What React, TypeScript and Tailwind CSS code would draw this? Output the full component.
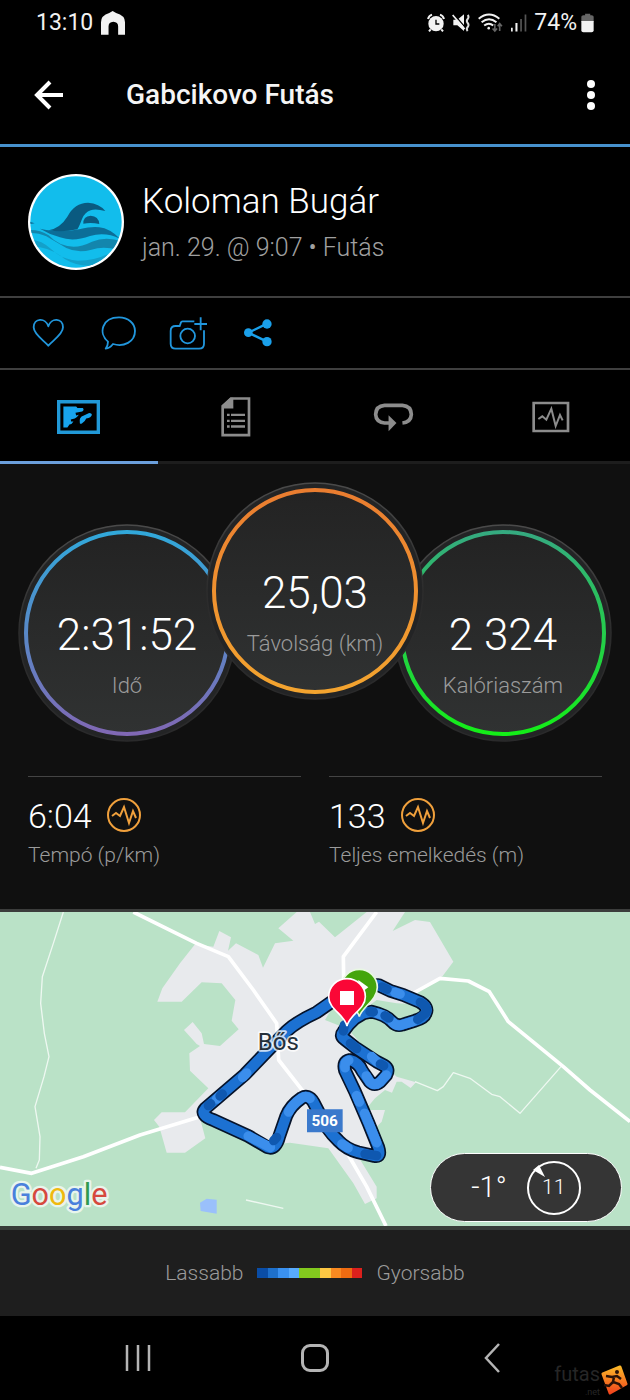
import React from "react";

const HAIR = "fill-none stroke-[#2196dc]";

function HomeGlyph() {
  return (
    <svg viewBox="303 33 70 70" className="size-6 fill-[#f2f2f2]" aria-hidden="true">
      <path d="M303 102V66q0-20 24-27l10-6 10 6q26 7 26 27v36h-20V78q0-13-14-14-14 1-14 14v24z" />
    </svg>
  );
}

function AlarmGlyph() {
  return (
    <svg viewBox="336 40 54 56" className="h-5 w-[18px]" aria-hidden="true">
      <circle cx="363" cy="70" r="23" fill="#f2f2f2" />
      <path d="M339 56q3-10 12-13M387 56q-3-10-12-13M347 87l-5 6M379 87l5 6" fill="none" stroke="#f2f2f2" strokeWidth="6" />
      <path d="M363 58v13h10" fill="none" stroke="#000" strokeWidth="4" />
    </svg>
  );
}

function MuteGlyph() {
  return (
    <svg viewBox="416 40 54 56" className="h-5 w-[18px]" aria-hidden="true">
      <path d="M420 58h12l20-16v50l-20-17h-12z" fill="#f2f2f2" />
      <path d="M421 41l36 42" stroke="#000" strokeWidth="4" />
      <path d="M418 44l36 42" stroke="#f2f2f2" strokeWidth="5" />
      <path d="M463 44q5 6 0 12t0 12 0 12 0 12" fill="none" stroke="#ddd" strokeWidth="6" />
    </svg>
  );
}

function WifiGlyph() {
  return (
    <svg viewBox="490 36 78 62" className="h-5 w-[26px]" aria-hidden="true">
      <g fill="none" stroke="#f2f2f2" strokeWidth="6">
        <path d="M494 54q32-26 64 0" />
        <path d="M503 65q23-19 46 0" />
        <path d="M511 75q15-12 28 0" />
      </g>
      <circle cx="525" cy="83" r="4" fill="#f2f2f2" />
      <path d="M544 70v22M537 84l7 8 7-8M559 92V70M553 77l6-8 7 8" fill="none" stroke="#666" strokeWidth="5" />
    </svg>
  );
}

function SignalGlyph() {
  return (
    <svg viewBox="584 40 50 56" className="h-5 w-[17px]" aria-hidden="true">
      <path d="M587 82h5v11h-5zM600 68h6v25h-6z" fill="#f2f2f2" />
      <path d="M614 56h5v37h-5zM627 43h5v50h-5z" fill="#555" />
    </svg>
  );
}

function BatteryGlyph() {
  return (
    <svg viewBox="797 40 38 56" className="h-5 w-[13px]" aria-hidden="true">
      <path d="M798 50q0-5 6-5h5v-4h15v4h4q6 0 6 5v15h-36z" fill="#666" />
      <path d="M798 62h36v27q0 6-6 6h-24q-6 0-6-6z" fill="#f2f2f2" />
    </svg>
  );
}

function Avatar() {
  return (
    <svg viewBox="84 72 288 288" className="size-24 shrink-0" role="img" aria-label="Koloman Bugár">
      <defs>
        <clipPath id="avatar">
          <circle cx="228" cy="216" r="137" />
        </clipPath>
      </defs>
      <circle cx="228" cy="216" r="144" fill="#fff" />
      <g clipPath="url(#avatar)">
        <rect x="84" y="72" width="288" height="288" fill="#12bdec" />
        <path d="M84 213l20 7-12 2z" fill="#0c6e98" />
        <path d="M84 240q35-2 62 16 32 34 75 34 25 0 55-15 45-18 96 2l-18 22q-45-12-80 0-40 12-75-5-35-20-60-35-25-12-55-10z" fill="#1386ad" />
        <path d="M84 268q40 0 70 30 30 30 80 34 50 0 90-20l-20 30q-60 15-110-15-40-36-110-40z" fill="#13a0ca" />
        <path d="M120 236q18 5 38 6 45 4 80-4 40-10 60-6 30 3 62 34-45-22-90-8-50 18-90 4-30-8-60-26z" fill="#0c6e98" />
        <path d="M146 241q36-8 56-41 22-42 62-42 34 2 52 25-30-8-44-2-18 6-26 26-8 22-14 31-45 10-86 3z" fill="#0a5a80" />
        <path d="M250 221q-1-22 22-24 24 1 26 25-24-5-48-1z" fill="#0a5a80" />
      </g>
    </svg>
  );
}

function HeartIcon() {
  return (
    <svg viewBox="97 500 99 96" className={`h-8 w-[33px] ${HAIR}`} strokeWidth="5.500" aria-hidden="true">
      <path d="M146 586c-10-13-44-33-44-55 0-28 36-30 44-3 8-27 44-25 44 3 0 22-34 42-44 55z" strokeLinejoin="round" />
    </svg>
  );
}

function CommentIcon() {
  return (
    <svg viewBox="303 498 105 102" className={`h-[34px] w-[35px] ${HAIR}`} strokeWidth="5.500" aria-hidden="true">
      <path d="M324 575c-30-25-18-73 33-73 27 0 48 18 48 41 0 33-34 49-66 39-6 8-13 13-22 14 5-7 7-13 7-21z" strokeLinejoin="round" />
    </svg>
  );
}

function CameraIcon() {
  return (
    <svg viewBox="510 500 117 102" className={`h-[34px] w-[39px] ${HAIR}`} strokeWidth="5.500" aria-hidden="true">
      <path d="M586 516h-35q-5 0-6 6l-3 8h-12q-15 0-15 15v38q0 15 15 15h70q15 0 15-15v-40" />
      <circle cx="566" cy="560" r="22" />
      <path d="M605 504v39M586 524h38" />
    </svg>
  );
}

function ShareIcon() {
  return (
    <svg viewBox="732 504 90 90" className="size-[30px] fill-[#1aa0ea] stroke-[#1aa0ea]" aria-hidden="true">
      <path d="M804 521l-56 27 56 27" fill="none" strokeWidth="7" />
      <g stroke="none">
        <circle cx="748" cy="548" r="13" />
        <circle cx="804" cy="522" r="14" />
        <circle cx="804" cy="575" r="14" />
      </g>
    </svg>
  );
}

function MapTabIcon() {
  return (
    <svg viewBox="170 89 128 101" className="h-[34px] w-[43px]" aria-hidden="true">
      <path d="M175 94h118v91H175z" fill="none" stroke="#2199d8" strokeWidth="10" />
      <path d="M189 108h38l4 5h16q5 6-2 10l-20 4 2 8 8-2q-6 9-12 11l-12 3 1 6h7q-4 8-12 9l-6 9h-12z" fill="#18a4ee" />
      <path d="M238 158q-4-18 12-23l14-7q9-1 10 5-2 9-17 11-4 10-13 15-5 2-6-1z" fill="#18a4ee" />
    </svg>
  );
}

function DocTabIcon() {
  return (
    <svg viewBox="662 80 90 119" className="h-10 w-[30px]" aria-hidden="true">
      <path d="M692 84h54v110h-79v-87z" fill="none" stroke="#8c8c8c" strokeWidth="8" />
      <path d="M690 82h9v32h-34v-8z" fill="#8c8c8c" />
      <path d="M680 133h8M692 133h42M680 151h8M692 151h42M680 168h8M692 168h42" stroke="#8c8c8c" strokeWidth="7" />
    </svg>
  );
}

function LapTabIcon() {
  return (
    <svg viewBox="172 105 124 88" className="h-[30px] w-[41px]" aria-hidden="true">
      <path d="M222 167h-15q-26-3-27-26 1-25 27-27h54q26 2 27 27-1 23-27 26" fill="none" stroke="#8c8c8c" strokeWidth="11" />
      <path d="M219 144l24 23-24 25z" fill="#8c8c8c" />
    </svg>
  );
}

function ChartTabIcon() {
  return (
    <svg viewBox="650 91 114 96" className="h-8 w-[38px]" fill="none" stroke="#8c8c8c" aria-hidden="true">
      <path d="M655 97h103v84H655z" strokeWidth="8" />
      <path d="M669 145l12-8 12 10 15-33 13 52 13-33 8 16" strokeWidth="6" />
    </svg>
  );
}

function PulseIcon() {
  return (
    <svg viewBox="0 0 34 34" className="size-[34px]" fill="none" stroke="#f0a03c" aria-hidden="true">
      <circle cx="17" cy="17" r="16" strokeWidth="2" />
      <path d="M5 18l4-3 4 3 4-9 5 16 4-12 3 7" strokeWidth="2" />
    </svg>
  );
}

function IconButton({ label, children }: { label: string; children: React.ReactNode }) {
  return (
    <button type="button" aria-label={label} className="flex w-[70px] items-center justify-center">
      {children}
    </button>
  );
}

function Tab({ label, active, children }: { label: string; active?: boolean; children: React.ReactNode }) {
  return (
    <button
      type="button"
      role="tab"
      aria-label={label}
      aria-selected={!!active}
      className={`flex h-[94px] flex-1 items-center justify-center border-b-[3px] pt-0.5 ${active ? "border-[#6b9fdc]" : "border-[#1d1d1d]"}`}
    >
      {children}
    </button>
  );
}

function Dial({ value, label, from, to, id, className }: { value: string; label: string; from: string; to: string; id: string; className: string }) {
  return (
    <div className={`relative flex size-[218px] shrink-0 flex-col items-center rounded-full ${className}`}>
      <svg viewBox="0 0 218 218" className="absolute inset-0 size-full" aria-hidden="true">
        <defs>
          <linearGradient id={id} x1="0" y1="0" x2="0" y2="1">
            <stop offset="0" stopColor={from} />
            <stop offset="1" stopColor={to} />
          </linearGradient>
          <linearGradient id={`${id}-face`} x1="0" y1="0" x2="0" y2="1">
            <stop offset="0" stopColor="#232323" />
            <stop offset="1" stopColor="#303232" />
          </linearGradient>
          <linearGradient id={`${id}-rim`} x1="0" y1="0" x2="0" y2="1">
            <stop offset="0" stopColor="#4a4a4a" />
            <stop offset="0.5" stopColor="#2c2c2c" />
            <stop offset="1" stopColor="#2a2a2b" />
          </linearGradient>
        </defs>
        <circle cx="109" cy="109" r="108" fill="#232425" stroke={`url(#${id}-rim)`} strokeWidth="1.500" />
        <circle cx="109" cy="109" r="101" fill={`url(#${id}-face)`} stroke={`url(#${id})`} strokeWidth="4" />
      </svg>
      <span className="relative mt-[84px] text-[44px] leading-[54px] font-light text-white">{value}</span>
      <span className="relative mt-2.5 text-[22px] leading-7 font-light text-[#9b9b9b]">{label}</span>
    </div>
  );
}

function Metric({ value, label }: { value: string; label: string }) {
  return (
    <div className="flex-1 border-t border-[#444] pt-4">
      <div className="flex h-11 items-center gap-[15px] text-[34px] font-light text-white">
        <span className="pt-0.5">{value}</span>
        <PulseIcon />
      </div>
      <div className="mt-1 text-[21px] leading-7 font-light text-[#9b9b9b]">{label}</div>
    </div>
  );
}

const ROUTE =
  "M1060 262L1100 256L1135 255L1170 272L1210 285L1260 306Q1287 322 1277 340Q1273 354 1245 362L1207 374Q1190 380 1175 364Q1157 345 1115 335L1090 340L1065 355Q1045 372 1030 395Q1019 408 1033 417L1065 442L1130 485L1153 497Q1169 507 1159 525L1141 545Q1123 560 1109 545L1087 513Q1075 486 1049 480Q1027 484 1035 512L1065 575L1105 668L1135 742Q1145 772 1123 768L1075 757Q1040 748 1015 722Q980 690 958 640L940 606Q925 582 905 594Q870 618 858 650L838 708Q828 750 803 742L745 708L640 660Q598 645 616 625L665 583L735 523L800 455L860 393Q890 365 950 337L1010 295";

const LIGHT_SEGMENTS =
  "M1185 277L1200 282M1177 366Q1189 380 1207 374L1240 364M1115 470L1131 485M1159 525L1141 545Q1123 560 1109 545L1099 528M1046 481Q1033 486 1035 503M1070 587L1078 606M1094 640L1130 728M1026 732L1044 744M930 595Q918 586 905 594Q876 614 866 636M811 742L745 708M728 532L740 519M650 597L657 590M1133 340L1155 347";
const DARK_SEGMENTS =
  "M1146 261L1161 268M1261 307Q1287 322 1277 340L1253 358M1033 375L1030 393M1051 430L1070 446M1155 347L1167 354M1141 492L1151 497M1095 762L1130 767M821 722L830 712M625 617L632 611M660 588L667 582M1110 335L1120 336";

function RouteMap() {
  return (
    <svg viewBox="0 36 1890 942" preserveAspectRatio="xMidYMid slice" className="block h-[314px] w-full" role="img" aria-label="Bős">
      <rect y="36" width="1890" height="942" fill="#bae2c7" />
      <path
        d="M472 305L487 265L540 190L585 133L640 140L658 93L693 112L684 152L708 130L775 165L789 203L825 130L880 122L835 85L890 36H930L945 72L957 65L1005 112L1100 36H1215L1178 93L1245 60L1290 66L1360 185L1328 228L1255 275L1240 312L1190 310L1130 300L1070 345L1055 400L1100 450L1160 500L1190 530L1248 547L1232 564L1205 545L1190 545L1176 578L1155 570L1125 595L1100 625L1108 630H1155L1145 665L1120 690L1130 740L1075 770L1130 860V895L1095 912L1060 850L985 745L870 728L810 735L600 655L616 715L555 758H500L478 680L462 660L485 637H555L625 565L570 512L568 460L600 438L590 432L552 390L578 366L605 400L612 432L660 438L716 388L695 362L706 300L665 250L605 247L545 305Z"
        fill="#e8eaed"
      />
      <path d="M975 360L1030 382L1060 300L1010 300z" fill="#bae2c7" />
      <path d="M600 908l20-12 30 3v42l-48-8z" fill="#9ac0fb" />
      <g fill="none" stroke="#fff" strokeLinejoin="round">
        <path d="M190 36L160 130L127 230L122 310L133 400L147 470L132 530L105 620L120 710L118 780L108 805M1245 545L1312 572L1330 560L1360 518L1410 535L1475 583L1500 590L1560 640L1683 500M738 900L850 925" strokeWidth="4" opacity="0.75" />
        <path d="M400 36L590 130L685 170L760 270L830 370L836 480L910 575M0 802L95 820L250 770L420 705L600 650M1130 36L1030 170L1032 300M1230 285L1320 235L1405 243L1468 275L1525 365L1690 500L1770 570L1890 665M1045 765L1100 860L1158 978" strokeWidth="11" />
      </g>
      <g fill="none" strokeLinejoin="round" strokeLinecap="round">
        <path d={ROUTE} stroke="#06132a" strokeWidth="41" />
        <path d={ROUTE} stroke="#1c71d2" strokeWidth="31" />
        <path d={LIGHT_SEGMENTS} stroke="#3b8eec" strokeWidth="29" />
        <path d={DARK_SEGMENTS} stroke="#0f58b0" strokeWidth="28" />
      </g>
      <path d="M1078 350c-6-28-54-48-54-88a54 54 0 01108 0c0 40-48 60-54 88z" fill="#43a50c" stroke="#e8f8e2" strokeWidth="5" />
      <path d="M1075 240l30 22-30 22z" fill="#fff" />
      <path d="M1041 378c-7-34-55-50-55-88a55 54 0 01110 0c0 38-48 54-55 88z" fill="#fa0736" stroke="#fff" strokeWidth="5" />
      <path d="M1020 273h42v42h-42z" fill="#fff" />
      <path d="M921 628h107v69H921z" fill="#3a79cc" />
      <g fontFamily="Roboto, sans-serif">
        <text x="974" y="679" textAnchor="middle" fontSize="46" fontWeight="700" fill="#fff">506</text>
        <text x="835" y="450" textAnchor="middle" fontSize="72" fontWeight="400" fill="#25303a" stroke="#fff" strokeOpacity="0.75" strokeWidth="11" strokeLinejoin="round" paintOrder="stroke">Bős</text>
        <text x="32" y="914" fontSize="92" fontWeight="400" stroke="#e8f5ec" strokeWidth="14" strokeLinejoin="round" paintOrder="stroke">
          <tspan fill="#4a80dc">G</tspan>
          <tspan fill="#d6493e">o</tspan>
          <tspan fill="#f0b90f">o</tspan>
          <tspan fill="#4a80dc">g</tspan>
          <tspan fill="#2f9a50">l</tspan>
          <tspan fill="#d6493e">e</tspan>
        </text>
      </g>
    </svg>
  );
}

function WeatherPill() {
  return (
    <div className="absolute right-2 bottom-1 flex h-[69px] w-[192px] items-center justify-center gap-5 rounded-full border border-white bg-[#353535] font-light text-white">
      <span className="text-[29px]">-1°</span>
      <span className="relative flex size-[54px] items-center justify-center rounded-full border-2 border-white text-[21px]">
        11
        <svg viewBox="0 0 12 12" className="absolute top-0.5 left-1 size-3 fill-white" aria-hidden="true">
          <path d="M0 5L6 0L12 12z" />
        </svg>
      </span>
    </div>
  );
}

const SCALE = [
  "bg-[#0a4da6]",
  "bg-[#1e70cb]",
  "bg-[#3a91f0]",
  "bg-[#58abfc]",
  "bg-[#82c91e]",
  "bg-[#82c91e]",
  "bg-[#fdc743]",
  "bg-[#f98a20]",
  "bg-[#ee6b11]",
  "bg-[#dc201c]",
];

export default function App() {
  return (
    <div className="w-full bg-black font-[Roboto,sans-serif] text-white">
      <div className="flex h-[46px] items-center justify-between px-9 text-[23px] text-[#f2f2f2]">
        <div className="flex items-center gap-2">
          <span>13:10</span>
          <HomeGlyph />
        </div>
        <div className="flex items-center gap-[7px]">
          <AlarmGlyph />
          <MuteGlyph />
          <WifiGlyph />
          <SignalGlyph />
          <div className="flex items-center gap-1">
            <span>74%</span>
            <BatteryGlyph />
          </div>
        </div>
      </div>

      <header className="flex h-[101px] items-center border-b-[3px] border-[#4791cd] pr-[27px] pl-8">
        <button type="button" aria-label="Vissza" className="flex w-[94px] items-center">
          <svg viewBox="0 0 34 30" className="h-[30px] w-[34px]" fill="none" stroke="#fff" strokeWidth="4" aria-hidden="true">
            <path d="M18 2L5 15l13 13M5 15h26" />
          </svg>
        </button>
        <h1 className="flex-1 text-[28px] font-medium text-[#f5f5f5]">Gabcikovo Futás</h1>
        <button type="button" aria-label="Továbbiak" className="flex w-6 justify-center">
          <svg viewBox="0 0 8 30" className="h-[30px] w-2 fill-white" aria-hidden="true">
            <circle cx="4" cy="4" r="4" />
            <circle cx="4" cy="15" r="4" />
            <circle cx="4" cy="26" r="4" />
          </svg>
        </button>
      </header>

      <section className="flex h-[151px] items-center gap-[18px] border-b-2 border-[#3f3f3f] px-7">
        <Avatar />
        <div className="pt-1">
          <div className="text-[35px] leading-[44px] font-light">Koloman Bugár</div>
          <div className="mt-1 text-[25px] leading-10 font-light text-[#a0a0a0]">jan. 29. @ 9:07 • Futás</div>
        </div>
      </section>

      <div className="flex h-[72px] border-b-2 border-[#3f3f3f] px-[13px]">
        <IconButton label="Kedvelés"><HeartIcon /></IconButton>
        <IconButton label="Hozzászólás"><CommentIcon /></IconButton>
        <IconButton label="Fotó hozzáadása"><CameraIcon /></IconButton>
        <IconButton label="Megosztás"><ShareIcon /></IconButton>
      </div>

      <div role="tablist" className="flex">
        <Tab label="Térkép" active><MapTabIcon /></Tab>
        <Tab label="Részletek"><DocTabIcon /></Tab>
        <Tab label="Körök"><LapTabIcon /></Tab>
        <Tab label="Grafikonok"><ChartTabIcon /></Tab>
      </div>

      <section className="border-b-[3px] border-[#3c3d3c] bg-[#101010] pt-[18px]">
        <div className="flex justify-center">
          <Dial id="time" value="2:31:52" label="Idő" from="#31a8da" to="#8068b4" className="mt-[42px]" />
          <Dial id="distance" value="25,03" label="Távolság (km)" from="#ea7d30" to="#f3a42f" className="z-10 -mx-[30px] mb-[42px]" />
          <Dial id="calories" value="2 324" label="Kalóriaszám" from="#35aa80" to="#14ee18" className="mt-[42px]" />
        </div>
        <div className="mt-[34px] flex gap-7 px-7 pb-10">
          <Metric value="6:04" label="Tempó (p/km)" />
          <Metric value="133" label="Teljes emelkedés (m)" />
        </div>
      </section>

      <section className="relative">
        <RouteMap />
        <WeatherPill />
      </section>

      <div className="flex h-[90px] items-center justify-center gap-[14px] border-t-4 border-[#373c38] bg-[#1e1e1e] text-[21px] font-light text-[#9b9b9b]">
        <span className="pt-0.5">Lassabb</span>
        <div className="flex h-2.5 w-[105px]">
          {SCALE.map((c, i) => (
            <div key={i} className={`flex-1 ${c}`} />
          ))}
        </div>
        <span className="pt-0.5">Gyorsabb</span>
      </div>

      <nav className="relative grid h-[84px] grid-cols-3 px-[50px]">
        <button type="button" aria-label="Legutóbbiak" className="flex items-center justify-center">
          <svg viewBox="0 0 26 28" className="h-7 w-[26px]" stroke="#b4b4b4" strokeWidth="2.500" aria-hidden="true">
            <path d="M2 1v26M13 1v26M24 1v26" />
          </svg>
        </button>
        <button type="button" aria-label="Kezdőképernyő" className="flex items-center justify-center">
          <span className="h-7 w-7 rounded-[9px] border-[3px] border-[#b4b4b4]" />
        </button>
        <button type="button" aria-label="Vissza" className="flex items-center justify-center">
          <svg viewBox="0 0 16 30" className="h-[30px] w-4" fill="none" stroke="#b4b4b4" strokeWidth="2.500" aria-hidden="true">
            <path d="M15 1L2 15l13 14" />
          </svg>
        </button>
        <div className="absolute right-0.5 bottom-0.5 flex items-center">
          <div className="flex flex-col items-end text-[#262626]">
            <span className="text-[20px] leading-6">futas</span>
            <span className="text-[9px] leading-3">.net</span>
          </div>
          <svg viewBox="0 0 28 30" className="h-[30px] w-7" aria-hidden="true">
            <defs>
              <linearGradient id="badge" x1="0" y1="0" x2="0" y2="1">
                <stop offset="0" stopColor="#fbb628" />
                <stop offset="1" stopColor="#f0441c" />
              </linearGradient>
            </defs>
            <path d="M3 9L20 2l6 17-16 9z" fill="url(#badge)" stroke="url(#badge)" strokeWidth="3" strokeLinejoin="round" />
            <circle cx="17" cy="7" r="2" fill="#2a1208" />
            <path d="M6 11l6 1 5-1 4 3M14 12l-1 5 6 2 3 4M13 17l-4 4-5-1" fill="none" stroke="#2a1208" strokeWidth="2.500" />
          </svg>
        </div>
      </nav>
    </div>
  );
}
